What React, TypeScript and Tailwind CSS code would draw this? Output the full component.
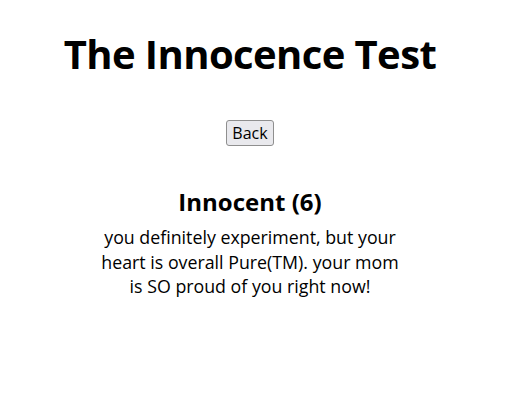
export default function App() {
  return (
    <main className="min-h-screen w-[500px] bg-white text-black">
      <div className="flex flex-col items-center font-['Open_Sans',sans-serif]">
        <h1 className="mt-[22px] text-[40px] font-bold leading-[64px] tracking-[-0.6px]">
          The Innocence Test
        </h1>
        <button className="mt-[34px] rounded-[3px] border border-[#8f8f8f] bg-[#e9e9ed] px-[5px] text-[16px] leading-[24px]">
          Back
        </button>
        <h2 className="mt-[41px] text-[24px] font-bold leading-[30px]">Innocent (6)</h2>
        <p className="mt-[8px] w-[310px] text-center text-[17.8px] leading-[24.5px]">
          you definitely experiment, but your heart is overall Pure(TM). your mom is SO proud of you right now!
        </p>
      </div>
    </main>
  );
}
